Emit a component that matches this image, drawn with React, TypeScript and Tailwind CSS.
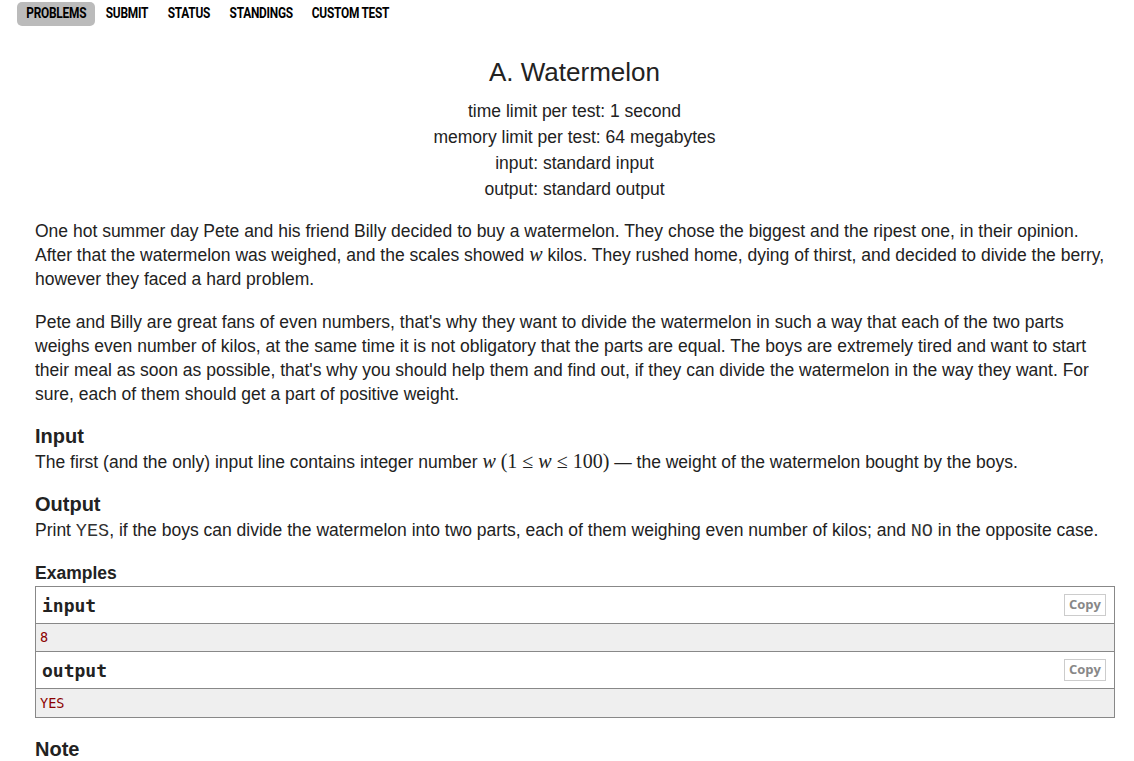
export default function App() {
  const body = "text-[#222] text-[17.5px] leading-[24px]";
  const mathI = "font-['Liberation_Serif',serif] italic text-[20px] leading-none";
  const mathR = "font-['Liberation_Serif',serif] text-[20px] leading-none";
  const tt = "font-['Liberation_Mono',monospace] text-[18.5px] leading-none text-[#333]";

  const navItems = [
    { label: "PROBLEMS", w: "w-[78px]", active: true },
    { label: "SUBMIT", w: "w-[62px]", active: false },
    { label: "STATUS", w: "w-[60px]", active: false },
    { label: "STANDINGS", w: "w-[82px]", active: false },
    { label: "CUSTOM TEST", w: "w-[96px]", active: false },
  ];

  const sample = (label: string, value: string, last: boolean) => (
    <>
      <div className="h-[37px] bg-white flex items-center justify-between pl-[6px] pr-[8px] border-b border-[#888]">
        <span className="font-['DejaVu_Sans_Mono',monospace] font-bold text-[18px] text-[#222]">
          {label}
        </span>
        <span className="h-[22px] w-[42px] border border-[#ccc] flex items-center justify-center text-[13px] font-bold text-[#888] font-['Open_Sans',sans-serif]">
          Copy
        </span>
      </div>
      <div
        className={
          "h-[28px] bg-[#efefef] flex items-center pl-[4px] font-['DejaVu_Sans_Mono',monospace] text-[13.5px] text-[#8b0000]" +
          (last ? "" : " border-b border-[#888]")
        }
      >
        {value}
      </div>
    </>
  );

  return (
    <div className="w-[1134px] min-h-[761px] bg-white font-['Liberation_Sans',Arial,sans-serif]">
      <nav className="h-[26px] pt-[1px] pl-[17px] flex items-center gap-[1px]">
        {navItems.map((item) => (
          <a
            key={item.label}
            className={
              "h-[24px] flex items-center justify-center rounded-[5px] " +
              item.w +
              (item.active ? " bg-[#bbb]" : "")
            }
          >
            <span className="inline-block whitespace-nowrap scale-x-[0.85] font-['Roboto',sans-serif] font-bold text-[14px] tracking-[-0.3px] text-black">
              {item.label}
            </span>
          </a>
        ))}
      </nav>

      <div className="pl-[35px] pr-[20px]">
        <div className="mt-[31px] text-center text-[26px] leading-[30px] text-[#222]">
          A. Watermelon
        </div>
        <div className="mt-[11px] text-center text-[17.5px] leading-[26px] text-[#222]">
          <div>time limit per test: 1 second</div>
          <div>memory limit per test: 64 megabytes</div>
          <div>input: standard input</div>
          <div>output: standard output</div>
        </div>

        <p className={"mt-[17px] " + body}>
          One hot summer day Pete and his friend Billy decided to buy a watermelon. They chose the biggest and the
          ripest one, in their opinion. After that the watermelon was weighed, and the scales showed{" "}
          <span className={mathI}>w</span> kilos. They rushed home, dying of thirst, and decided to divide the berry,
          however they faced a hard problem.
        </p>
        <p className={"mt-[19px] " + body}>
          Pete and Billy are great fans of even numbers, that's why they want to divide the watermelon in such a way
          that each of the two parts weighs even number of kilos, at the same time it is not obligatory that the parts
          are equal. The boys are extremely tired and want to start their meal as soon as possible, that's why you
          should help them and find out, if they can divide the watermelon in the way they want. For sure, each of them
          should get a part of positive weight.
        </p>

        <div className="mt-[18px] text-[20px] leading-[24px] font-bold text-[#222]">Input</div>
        <p className={"mt-[2px] " + body}>
          The first (and the only) input line contains integer number <span className={mathI}>w</span>{" "}
          <span className={mathR}>(1 ≤ </span>
          <span className={mathI}>w</span>
          <span className={mathR}> ≤ 100)</span> — the weight of the watermelon bought by the boys.
        </p>

        <div className="mt-[18px] text-[20px] leading-[24px] font-bold text-[#222]">Output</div>
        <p className={"mt-[2px] " + body}>
          Print <span className={tt}>YES</span>, if the boys can divide the watermelon into two parts, each of them
          weighing even number of kilos; and <span className={tt}>NO</span> in the opposite case.
        </p>

        <div className="mt-[19px] text-[17.5px] leading-[24px] font-bold text-[#222]">Examples</div>
        <div className="mt-[1px] border border-[#888] w-[1080px]">
          {sample("input", "8", false)}
          {sample("output", "YES", true)}
        </div>

        <div className="mt-[19px] text-[20px] leading-[24px] font-bold text-[#222]">Note</div>
      </div>
    </div>
  );
}
